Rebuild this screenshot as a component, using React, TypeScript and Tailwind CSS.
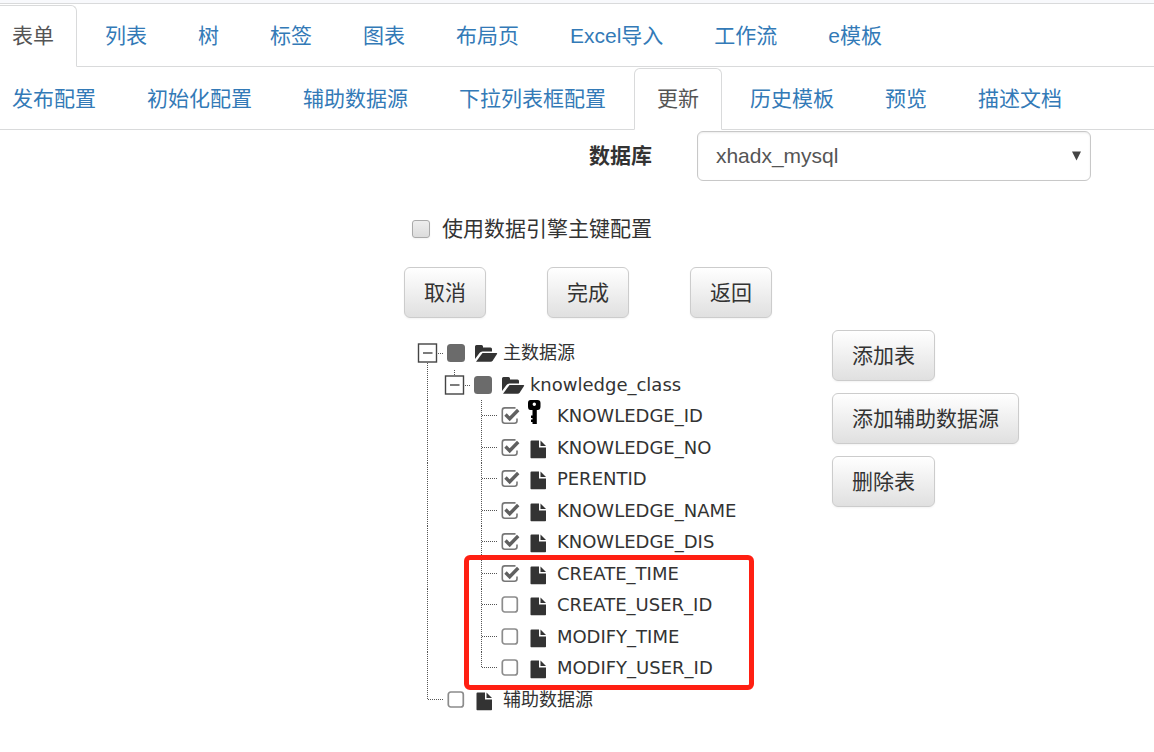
import React, { useState } from 'react';

const mainTabs = ['表单', '列表', '树', '标签', '图表', '布局页', 'Excel导入', '工作流', 'e模板'];

const subTabs = ['发布配置', '初始化配置', '辅助数据源', '下拉列表框配置', '更新', '历史模板', '预览', '描述文档'];

type Guide = 'root' | 'branch' | 'line' | 'empty' | 'tee' | 'corner';

type TreeRow = {
  label: string;
  guides: Guide[];
  icon: 'folder' | 'key' | 'file';
  state: 'on' | 'off' | 'mixed';
};

const treeRows: TreeRow[] = [
  { label: '主数据源', guides: ['root'], icon: 'folder', state: 'mixed' },
  { label: 'knowledge_class', guides: ['line', 'branch'], icon: 'folder', state: 'mixed' },
  { label: 'KNOWLEDGE_ID', guides: ['line', 'empty', 'tee'], icon: 'key', state: 'on' },
  { label: 'KNOWLEDGE_NO', guides: ['line', 'empty', 'tee'], icon: 'file', state: 'on' },
  { label: 'PERENTID', guides: ['line', 'empty', 'tee'], icon: 'file', state: 'on' },
  { label: 'KNOWLEDGE_NAME', guides: ['line', 'empty', 'tee'], icon: 'file', state: 'on' },
  { label: 'KNOWLEDGE_DIS', guides: ['line', 'empty', 'tee'], icon: 'file', state: 'on' },
  { label: 'CREATE_TIME', guides: ['line', 'empty', 'tee'], icon: 'file', state: 'on' },
  { label: 'CREATE_USER_ID', guides: ['line', 'empty', 'tee'], icon: 'file', state: 'off' },
  { label: 'MODIFY_TIME', guides: ['line', 'empty', 'tee'], icon: 'file', state: 'off' },
  { label: 'MODIFY_USER_ID', guides: ['line', 'empty', 'corner'], icon: 'file', state: 'off' },
  { label: '辅助数据源', guides: ['corner'], icon: 'file', state: 'off' },
];

// --- Tabs ---
function TabBar({ name, tabs, active, onSelect }: {
  name: string;
  tabs: string[];
  active: string;
  onSelect: (tab: string) => void;
}) {
  return (
    <nav aria-label={name} className="flex gap-[5px] border-b border-[#d9dadb] -ml-[11px] h-[63px] pt-px">
      {tabs.map((tab) => (
        <a
          key={tab}
          href="#"
          onClick={(e) => { e.preventDefault(); onSelect(tab); }}
          className={`shrink-0 whitespace-nowrap h-[62px] px-[22px] leading-[60px] border rounded-t-md ${
            tab === active
              ? 'bg-white text-[#555] border-[#d9dadb] border-b-white'
              : 'text-[#337ab7] border-transparent'
          }`}
        >
          {tab}
        </a>
      ))}
    </nav>
  );
}

function Button({ children }: { children: React.ReactNode }) {
  return (
    <button
      type="button"
      className="h-[51px] px-[19px] border border-[#ccc] rounded-md bg-linear-to-b from-white to-[#e0e0e0] shadow-xs whitespace-nowrap"
    >
      {children}
    </button>
  );
}

// --- Tree drawing ---
function GuideLine({ type }: { type: Guide }) {
  const lines = {
    root: 'M13.5 26V32M24 16.5H30',
    branch: 'M13.5 1V7M24 16.5H30',
    line: 'M13.5 0V32',
    empty: '',
    tee: 'M13.5 0V32M14 15.5H30',
    corner: 'M13.5 0V16M14 15.5H30',
  };
  const svg = (
    <svg className="w-[27px] h-8 overflow-visible" viewBox="0 0 27 32" fill="none" aria-hidden="true">
      <path d={lines[type]} stroke="#555" strokeDasharray="1 1" />
      {(type === 'root' || type === 'branch') && (
        <>
          <rect x="4.5" y="7" width="18" height="18" stroke="#444" strokeWidth="1.4" />
          <path d="M9 16H18.5" stroke="#444" strokeWidth="1.4" />
        </>
      )}
    </svg>
  );
  if (type === 'root' || type === 'branch') {
    return <button type="button" aria-label="折叠" className="shrink-0">{svg}</button>;
  }
  return <span className="shrink-0">{svg}</span>;
}

function TreeIcon({ type }: { type: TreeRow['icon'] }) {
  return (
    <svg className="w-6 h-8" viewBox="0 0 24 32" fill="#333" aria-hidden="true">
      {type === 'folder' && (
        <>
          <path d="M1 22V9.500Q1 8 2.500 8H7.500Q9 8 9 9.500V10.500H16.500Q18 10.500 18 12V14.500H8.500Q6.500 14.500 5.500 16Z" />
          <path d="M8.500 16H22.500Q23.600 16 23 17L18.800 23.500Q18 24.700 16.500 24.700H2Z" />
        </>
      )}
      {type === 'file' && (
        <>
          <path d="M3.500 8.500H11V15.500H18V25.500Q18 26.200 17.300 26.200H3.200Q2.500 26.200 2.500 25.500V9.500Q2.500 8.500 3.500 8.500Z" />
          <path d="M12.500 8.500L18 14H12.500Z" />
        </>
      )}
      {type === 'key' && (
        <path
          fill="#000"
          fillRule="evenodd"
          d="M2.500 0H9.500Q12.500 0 12.500 3V6.500Q12.500 10 9.500 10H8.800V24H4.500V22H3V19.500H4.500V18H3V15.500H4.500V10H2.500Q0 10 0 6.500V3Q0 0 2.500 0ZM6.300 2.500A1.700 1.700 0 1 0 6.300 5.900A1.700 1.700 0 1 0 6.300 2.500Z"
        />
      )}
    </svg>
  );
}

function CheckGlyph({ state }: { state: TreeRow['state'] }) {
  return (
    <svg className="absolute inset-0 size-[18px] overflow-visible pointer-events-none" viewBox="0 0 18 18" fill="none" aria-hidden="true">
      {state === 'mixed' && <rect width="18" height="18" rx="3.500" fill="#6b6b6b" />}
      {state === 'off' && <rect x="1.300" y="1" width="15" height="15" rx="2.500" stroke="#8c8c8c" strokeWidth="1.700" />}
      {state === 'on' && (
        <>
          <path d="M14.500 .900H3.800Q1.300 .900 1.300 3.400V13.700Q1.300 16.200 3.800 16.200H13.500Q16 16.200 16 13.700V11.500" stroke="#777" strokeWidth="1.600" />
          <path d="M4.500 7.500L8.700 11.800L17.200 3" stroke="#606060" strokeWidth="3.400" />
        </>
      )}
    </svg>
  );
}

function SourceTree() {
  const [states, setStates] = useState(treeRows.map((row) => row.state));

  const toggle = (index: number) =>
    setStates(states.map((s, i) => (i === index ? (s === 'on' ? 'off' : 'on') : s)));

  return (
    <div className="relative pt-[7px] pl-[10px]">
      <ul className="font-['DejaVu_Sans','Noto_Sans_CJK_SC',sans-serif] text-lg leading-8">
        {treeRows.map((row, index) => (
          <li key={index} className="flex items-start odd:h-8 even:h-[31px]">
            {row.guides.map((guide, i) => <GuideLine key={i} type={guide} />)}
            <span className="relative shrink-0 size-[18px] mt-[7px] ml-[6px]">
              <input
                id={`node-${index}`}
                type="checkbox"
                checked={states[index] === 'on'}
                onChange={() => toggle(index)}
                className="block appearance-none size-[18px]"
              />
              <CheckGlyph state={states[index]} />
            </span>
            <label htmlFor={`node-${index}`} className="flex gap-[5px] pl-[9px] whitespace-nowrap">
              <TreeIcon type={row.icon} />
              {row.label}
            </label>
          </li>
        ))}
      </ul>
      {/* highlight around the audit fields */}
      <div className="absolute top-[225px] left-[60px] w-[290px] h-[135px] border-5 border-[#ff1f12] rounded-md pointer-events-none" />
    </div>
  );
}

export default function App() {
  const [mainTab, setMainTab] = useState('表单');
  const [subTab, setSubTab] = useState('更新');

  return (
    <div className="min-h-screen bg-white overflow-x-hidden font-['Liberation_Sans','Noto_Sans_CJK_SC',sans-serif] text-[21px] text-[#333]">
      <div className="h-1 bg-[#f8f9fc] border-b border-[#d9dadb]" />
      <TabBar name="模块" tabs={mainTabs} active={mainTab} onSelect={setMainTab} />
      <TabBar name="表单配置" tabs={subTabs} active={subTab} onSelect={setSubTab} />

      <main className="pl-[35%] pt-px">
        <div className="flex items-center gap-[45px] pl-[185px]">
          <label htmlFor="database" className="font-bold whitespace-nowrap">数据库</label>
          <div className="relative w-[394px]">
            <select
              id="database"
              className="block appearance-none w-full h-[50px] pl-[18px] pr-10 border border-[#c8c8c8] rounded-md bg-white text-[#555] shadow-[inset_0_1px_2px_rgba(0,0,0,0.08)]"
            >
              <option>xhadx_mysql</option>
            </select>
            <svg className="absolute right-[10px] top-5 w-[9px] h-[10px] pointer-events-none" viewBox="0 0 9 10" aria-hidden="true">
              <path d="M0 0.500H9L4.500 9.500Z" fill="#444" />
            </svg>
          </div>
        </div>

        <div className="flex items-center gap-3 h-[30px] mt-[33px] pl-2">
          <input
            id="use-key"
            type="checkbox"
            className="appearance-none size-[18px] border border-[#aaa] rounded-[3px] bg-linear-to-b from-[#eee] to-[#dcdcdc] shadow-xs checked:bg-none checked:bg-[#337ab7]"
          />
          <label htmlFor="use-key">使用数据引擎主键配置</label>
        </div>

        <div className="flex gap-[61px] mt-[23px]">
          <Button>取消</Button>
          <Button>完成</Button>
          <Button>返回</Button>
        </div>

        <div className="grid grid-cols-[428px_auto] items-start mt-3">
          <SourceTree />
          <div className="flex flex-col items-start gap-3">
            <Button>添加表</Button>
            <Button>添加辅助数据源</Button>
            <Button>删除表</Button>
          </div>
        </div>
      </main>
    </div>
  );
}
